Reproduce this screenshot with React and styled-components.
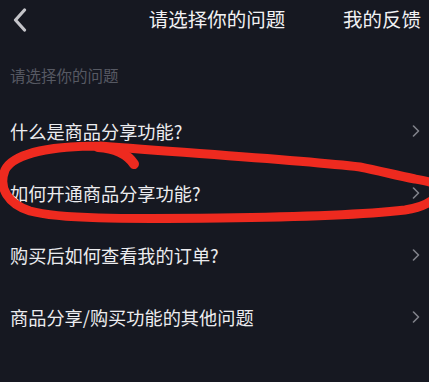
import React from "react";
import styled, { createGlobalStyle } from "styled-components";

const Global = createGlobalStyle`
  html, body { margin: 0; padding: 0; background: #161821; }
  body { font-family: "Noto Sans CJK SC", "Noto Sans", sans-serif; }
`;

const Page = styled.div`
  position: relative;
  width: 429px;
  height: 382px;
  overflow: hidden;
  background: #161821;
  color: #e9e9ec;
`;

const Header = styled.header`
  height: 38px;
  display: grid;
  grid-template-columns: 1fr auto 1fr;
  align-items: center;
  padding: 0 8px 0 13px;
`;

const BackButton = styled.div`
  display: flex;
  align-items: center;
  justify-self: start;
  margin-top: 1px;
`;

const Title = styled.div`
  font-size: 19.5px;
  line-height: 24px;
  color: #f1f1f3;
`;

const Action = styled.div`
  justify-self: end;
  font-size: 19.5px;
  line-height: 24px;
  color: #f1f1f3;
`;

const SectionLabel = styled.div`
  padding: 27px 10px 15px;
  font-size: 15.5px;
  line-height: 20px;
  color: #565963;
`;

const List = styled.div`
  display: flex;
  flex-direction: column;
`;

const Row = styled.div`
  height: 62px;
  display: flex;
  align-items: center;
  justify-content: space-between;
  padding: 0 9px 0 10px;
`;

const RowText = styled.span`
  font-size: 18.2px;
  line-height: 24px;
  color: #ececef;
`;

const Overlay = styled.svg`
  position: absolute;
  left: 0;
  top: 0;
  pointer-events: none;
`;

const Chevron = () => (
  <svg width="8" height="12" viewBox="0 0 8 12">
    <polyline points="1.5,1 6.5,6 1.5,11" fill="none" stroke="#80828a" strokeWidth="1.6" strokeLinecap="round" strokeLinejoin="round" />
  </svg>
);

const items = [
  "什么是商品分享功能?",
  "如何开通商品分享功能?",
  "购买后如何查看我的订单?",
  "商品分享/购买功能的其他问题",
];

export default function App() {
  return (
    <>
      <Global />
      <Page>
        <Header>
          <BackButton>
            <svg width="14" height="24" viewBox="0 0 14 24">
              <polyline points="11.5,2 2.5,12 11.5,22" fill="none" stroke="#c4c4c9" strokeWidth="3.2" strokeLinecap="round" strokeLinejoin="round" />
            </svg>
          </BackButton>
          <Title>请选择你的问题</Title>
          <Action>我的反馈</Action>
        </Header>
        <SectionLabel>请选择你的问题</SectionLabel>
        <List>
          {items.map((t) => (
            <Row key={t}>
              <RowText>{t}</RowText>
              <Chevron />
            </Row>
          ))}
        </List>
        <Overlay width="429" height="382" viewBox="0 0 429 382">
          <path
            d="M 100 146 C 55 146, 14 152, 5 170 C -2 188, 8 204, 30 211 C 60 219, 120 219, 220 218 C 300 217, 370 214, 405 210 C 425 207, 435 200, 440 192 C 444 184, 432 182, 415 179 C 395 175, 380 171, 360 167 C 300 160, 200 154, 100 146"
            fill="none"
            stroke="#ee2a1f"
            strokeWidth="9"
            strokeLinecap="round"
            strokeLinejoin="round"
          />
          <path
            d="M 98 147 C 112 148, 126 152, 134 164"
            fill="none"
            stroke="#ee2a1f"
            strokeWidth="10"
            strokeLinecap="round"
          />
        </Overlay>
      </Page>
    </>
  );
}
